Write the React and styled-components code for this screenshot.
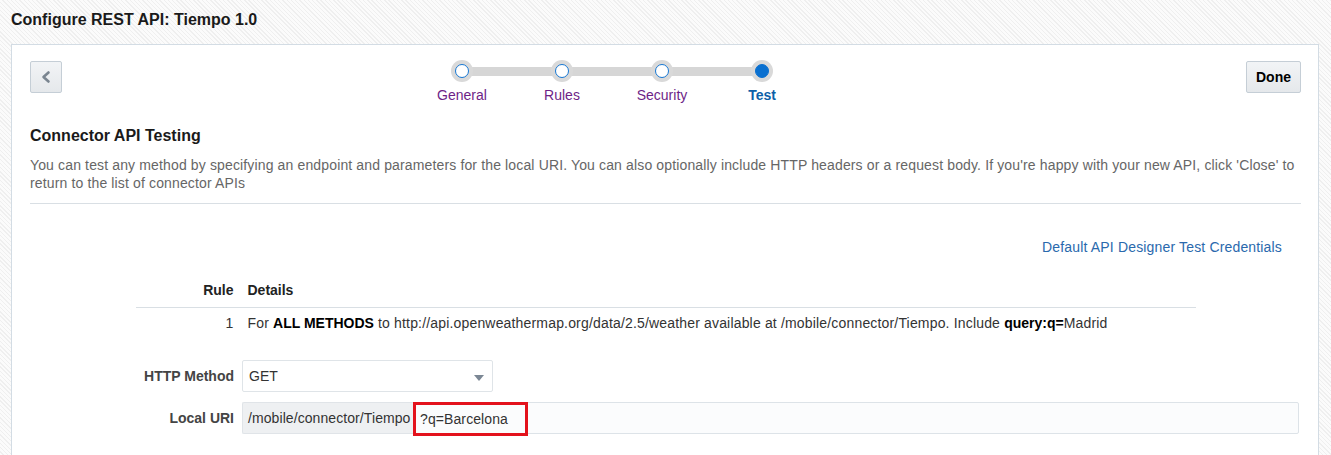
import React from 'react';
import styled, { createGlobalStyle } from 'styled-components';

const GlobalStyle = createGlobalStyle`
  html, body {
    margin: 0;
    padding: 0;
    height: 100%;
    overflow: hidden;
  }
  body {
    font-family: "Liberation Sans", Arial, sans-serif;
    font-size: 14px;
    color: #333;
    background: repeating-linear-gradient(
      45deg,
      #fbfbfb 0px,
      #fbfbfb 2px,
      #efefef 2px,
      #efefef 3px
    );
  }
`;

const Page = styled.div`
  padding: 10px 12px 0 11px;
`;

const Title = styled.h1`
  margin: 0 0 14px;
  font-size: 16px;
  line-height: 20px;
  font-weight: bold;
  color: #1a1a1a;
`;

const Panel = styled.div`
  background: #fff;
  border: 1px solid #d3dce4;
  padding: 16px 17px 40px 18px;
`;

const TopRow = styled.div`
  display: flex;
  align-items: flex-start;
`;

const ToolButton = styled.button`
  height: 32px;
  min-width: 32px;
  padding: 0 ${(p) => (p.$icon ? '0' : '9px')};
  display: flex;
  align-items: center;
  justify-content: center;
  background: linear-gradient(#f2f4f6, #e5e8eb);
  border: 1px solid #c5ced6;
  border-radius: 2px;
  font-family: "Liberation Sans", Arial, sans-serif;
  font-size: 14px;
  font-weight: bold;
  color: #000;
  cursor: pointer;
`;

const TrainArea = styled.div`
  flex: 1;
  display: flex;
  justify-content: center;
  padding-right: 84px;
  margin-top: -1px;
`;

const Train = styled.div`
  position: relative;
  display: flex;

  &::before {
    content: '';
    position: absolute;
    left: 50px;
    right: 50px;
    top: 7px;
    height: 9px;
    background: #d6d6d6;
  }
`;

const Step = styled.div`
  position: relative;
  width: 100px;
  display: flex;
  flex-direction: column;
  align-items: center;
`;

const Ring = styled.div`
  width: 22px;
  height: 22px;
  border-radius: 50%;
  background: #d9d9d9;
  display: flex;
  align-items: center;
  justify-content: center;
`;

const Dot = styled.div`
  width: 14px;
  height: 14px;
  box-sizing: border-box;
  border-radius: 50%;
  background: ${(p) => (p.$active ? '#0a70d0' : '#fff')};
  border: 1.5px solid ${(p) => (p.$active ? '#0a70d0' : '#1677d3')};
`;

const StepLabel = styled.div`
  margin-top: 4px;
  line-height: 18px;
  font-size: 14px;
  color: ${(p) => (p.$active ? '#0d5fa8' : '#6e1f87')};
  font-weight: ${(p) => (p.$active ? 'bold' : 'normal')};
`;

const Heading = styled.h2`
  margin: 22px 0 0;
  font-size: 16px;
  line-height: 20px;
  font-weight: bold;
  color: #1a1a1a;
`;

const Description = styled.p`
  margin: 10px 0 0;
  line-height: 18px;
  color: #666;
  letter-spacing: 0.14px;
`;

const Divider = styled.hr`
  margin: 11px 0 0;
  border: 0;
  border-top: 1px solid #d9dfe4;
`;

const LinkRow = styled.div`
  display: flex;
  justify-content: flex-end;
  margin-top: 34px;
  padding-right: 19px;
  line-height: 18px;
`;

const Link = styled.a`
  color: #2a69ad;
  text-decoration: none;
  letter-spacing: 0.16px;
`;

const RulesTable = styled.table`
  width: 1060px;
  margin: 21px auto 0;
  border-collapse: collapse;
`;

const HeadCell = styled.th`
  padding: 4px 7px 8px;
  line-height: 18px;
  text-align: ${(p) => (p.$right ? 'right' : 'left')};
  width: ${(p) => (p.$right ? '91px' : 'auto')};
  font-weight: bold;
  color: #222;
  border-bottom: 1px solid #d9dfe4;
`;

const Cell = styled.td`
  padding: 6px 7px 8px;
  line-height: 18px;
  text-align: ${(p) => (p.$right ? 'right' : 'left')};
  color: #333;
  letter-spacing: 0.17px;

  b {
    color: #000;
    letter-spacing: 0;
  }
`;

const Form = styled.div`
  display: grid;
  grid-template-columns: 212px 1fr;
  row-gap: 10px;
  align-items: center;
  margin-top: 20px;
  padding-right: 2px;
`;

const FieldLabel = styled.label`
  text-align: right;
  padding-right: 8px;
  font-weight: bold;
  color: #444;
`;

const Select = styled.div`
  position: relative;
  width: 251px;
  height: 32px;
  box-sizing: border-box;
  border: 1px solid #dfe4e8;
  border-radius: 2px;
  background: #fff;
  display: flex;
  align-items: center;
  padding-left: 6px;
  color: #333;

  &::after {
    content: '';
    position: absolute;
    right: 8px;
    top: 14px;
    border-left: 5px solid transparent;
    border-right: 5px solid transparent;
    border-top: 6px solid #7b8794;
  }
`;

const InputGroup = styled.div`
  display: flex;
  height: 32px;
`;

const Addon = styled.div`
  width: 171px;
  box-sizing: border-box;
  display: flex;
  align-items: center;
  padding-left: 5px;
  background: #eef0f2;
  border: 1px solid #e0e4e8;
  border-right: 0;
  border-radius: 2px 0 0 2px;
  color: #333;
  white-space: nowrap;
  overflow: hidden;
  letter-spacing: 0.08px;
`;

const Field = styled.div`
  position: relative;
  flex: 1;
  background: #fbfcfd;
  border: 1px solid #dde3e8;
  border-radius: 0 2px 2px 0;
`;

const Highlight = styled.span`
  position: absolute;
  left: -1px;
  top: -1px;
  width: 115px;
  height: 34px;
  box-sizing: border-box;
  border: 3px solid #e3121c;
  display: flex;
  align-items: center;
  padding-left: 4px;
  color: #333;
  letter-spacing: 0.1px;
`;

const steps = ['General', 'Rules', 'Security', 'Test'];

const App = () => {
  return (
    <Page>
      <GlobalStyle />
      <Title>Configure REST API: Tiempo 1.0</Title>
      <Panel>
        <TopRow>
          <ToolButton $icon aria-label="Back">
            <svg width="12" height="14" viewBox="0 0 12 14">
              <polyline
                points="8.5,2.5 3.5,7 8.5,11.5"
                fill="none"
                stroke="#7a8590"
                strokeWidth="2.6"
                strokeLinecap="round"
                strokeLinejoin="round"
              />
            </svg>
          </ToolButton>
          <TrainArea>
            <Train>
              {steps.map((s, i) => {
                const active = i === steps.length - 1;
                return (
                  <Step key={s}>
                    <Ring>
                      <Dot $active={active} />
                    </Ring>
                    <StepLabel $active={active}>{s}</StepLabel>
                  </Step>
                );
              })}
            </Train>
          </TrainArea>
          <ToolButton>Done</ToolButton>
        </TopRow>

        <Heading>Connector API Testing</Heading>
        <Description>
          You can test any method by specifying an endpoint and parameters for the local URI. You can also
          optionally include HTTP headers or a request body. If you're happy with your new API, click 'Close' to
          return to the list of connector APIs
        </Description>
        <Divider />

        <LinkRow>
          <Link href="#">Default API Designer Test Credentials</Link>
        </LinkRow>

        <RulesTable>
          <thead>
            <tr>
              <HeadCell $right>Rule</HeadCell>
              <HeadCell>Details</HeadCell>
            </tr>
          </thead>
          <tbody>
            <tr>
              <Cell $right>1</Cell>
              <Cell>
                For <b>ALL METHODS</b> to http://api.openweathermap.org/data/2.5/weather available at
                /mobile/connector/Tiempo. Include <b>query:q=</b>Madrid
              </Cell>
            </tr>
          </tbody>
        </RulesTable>

        <Form>
          <FieldLabel>HTTP Method</FieldLabel>
          <Select>GET</Select>
          <FieldLabel>Local URI</FieldLabel>
          <InputGroup>
            <Addon>/mobile/connector/Tiempo</Addon>
            <Field>
              <Highlight>?q=Barcelona</Highlight>
            </Field>
          </InputGroup>
        </Form>
      </Panel>
    </Page>
  );
};

export default App;
